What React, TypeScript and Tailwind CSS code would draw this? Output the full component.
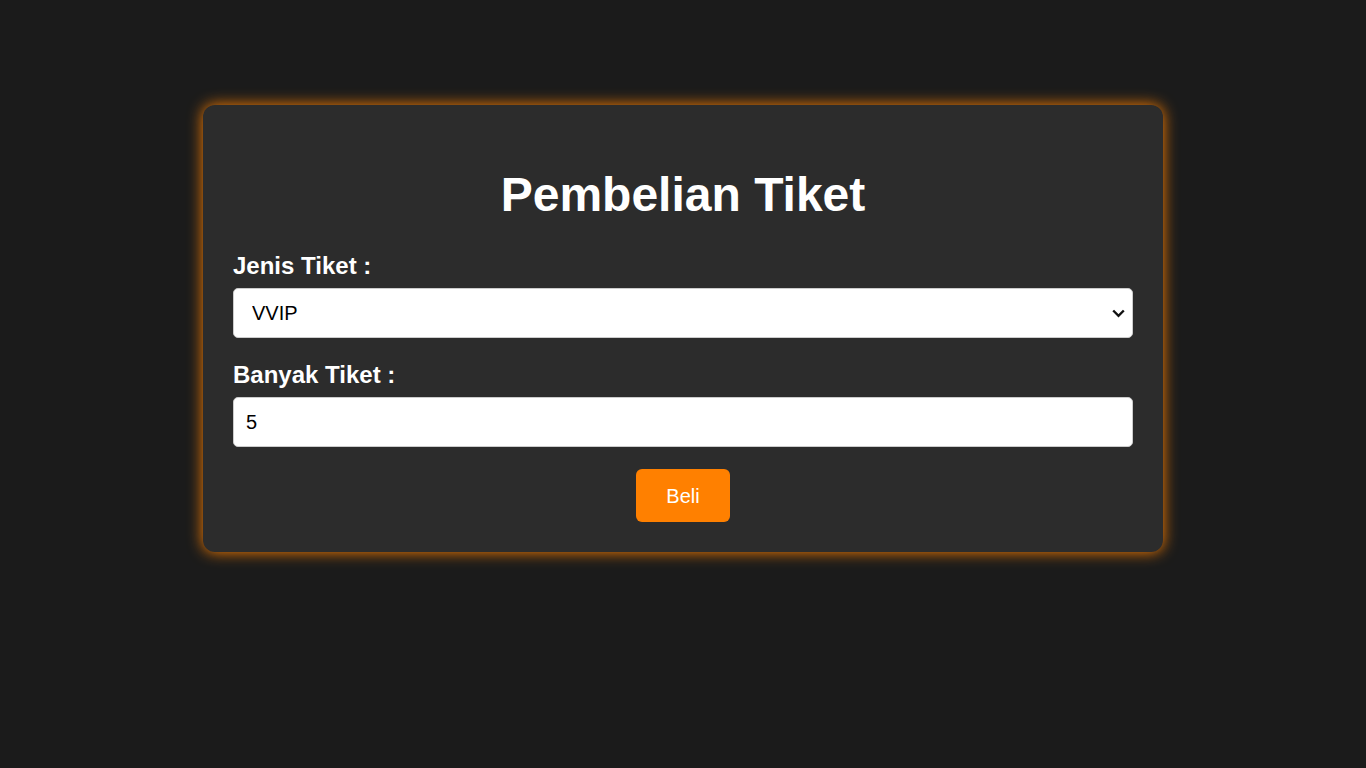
import React from "react";

export default function App() {
  return (
    <div className="min-h-[768px] w-full bg-[#1b1b1b] pt-[105px] font-['Liberation_Sans',Arial,sans-serif]">
      <div className="mx-auto w-[960px] rounded-[12px] bg-[#2c2c2c] px-[30px] pb-[30px] pt-[62px] shadow-[0_0_15px_#ff8000]">
        <h1 className="text-center text-[48px] font-bold leading-[55px] text-white">Pembelian Tiket</h1>
        <label className="mt-[30px] block text-[24px] font-bold leading-[28px] text-white">Jenis Tiket :</label>
        <div className="relative mt-[8px]">
          <select
            defaultValue="VVIP"
            className="block h-[50px] w-full appearance-none rounded-[5px] border border-[#ccc] bg-white pl-[18px] pr-[40px] text-[20px] text-black"
          >
            <option>Reguler</option>
            <option>VIP</option>
            <option>VVIP</option>
          </select>
          <svg
            className="pointer-events-none absolute right-[8px] top-[21px]"
            width="13"
            height="9"
            viewBox="0 0 13 9"
            fill="none"
          >
            <path d="M1.2 1.5 L6.5 6.8 L11.8 1.5" stroke="#111" strokeWidth="2.4" />
          </svg>
        </div>
        <label className="mt-[23px] block text-[24px] font-bold leading-[28px] text-white">Banyak Tiket :</label>
        <input
          type="number"
          defaultValue={5}
          className="mt-[8px] block h-[50px] w-full rounded-[5px] border border-[#ccc] bg-white px-[12px] text-[20px] text-black"
        />
        <div className="mt-[22px] flex justify-center">
          <button className="h-[53px] w-[94px] rounded-[6px] bg-[#ff8000] text-[20px] text-white">Beli</button>
        </div>
      </div>
    </div>
  );
}
